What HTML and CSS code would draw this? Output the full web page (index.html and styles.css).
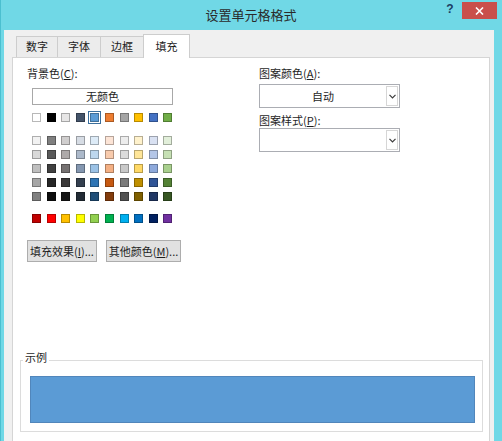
FILE: index.html
```html
<!DOCTYPE html>
<html lang="zh-CN">
<head>
<meta charset="utf-8">
<title>设置单元格格式</title>
<link rel="stylesheet" href="styles.css">
</head>
<body>
<div class="window">
  <div class="titlebar">
    <div class="spacer"></div>
    <div class="title">设置单元格格式</div>
    <div class="controls">
      <div class="help">?</div>
      <div class="close"><svg width="9" height="8" viewBox="0 0 9 8"><path d="M1 0.5 L8 7.5 M8 0.5 L1 7.5" stroke="#fff" stroke-width="1.6"/></svg></div>
    </div>
  </div>
  <div class="client">
    <div class="tabs">
      <div class="tab t1">数字</div>
      <div class="tab t2">字体</div>
      <div class="tab t3">边框</div>
      <div class="tab t4 active">填充</div>
    </div>
    <div class="panel">
      <div class="top">
        <div class="left">
          <div class="label">背景色(<u>C</u>):</div>
          <div class="nocolor">无颜色</div>
          <div class="swrow first">
            <span class="sw" style="background:#ffffff"></span>
            <span class="sw" style="background:#000000"></span>
            <span class="sw" style="background:#e7e6e6"></span>
            <span class="sw" style="background:#44546a"></span>
            <span class="sw sel" style="background:#5b9bd5"></span>
            <span class="sw" style="background:#ed7d31"></span>
            <span class="sw" style="background:#a5a5a5"></span>
            <span class="sw" style="background:#ffc000"></span>
            <span class="sw" style="background:#4472c4"></span>
            <span class="sw" style="background:#70ad47"></span>
          </div>
          <div class="grid">
            <span class="sw" style="background:#f2f2f2"></span>
            <span class="sw" style="background:#7f7f7f"></span>
            <span class="sw" style="background:#d0cece"></span>
            <span class="sw" style="background:#d6dce4"></span>
            <span class="sw" style="background:#ddebf7"></span>
            <span class="sw" style="background:#fce4d6"></span>
            <span class="sw" style="background:#ededed"></span>
            <span class="sw" style="background:#fff2cc"></span>
            <span class="sw" style="background:#d9e1f2"></span>
            <span class="sw" style="background:#e2efda"></span>

            <span class="sw" style="background:#d9d9d9"></span>
            <span class="sw" style="background:#595959"></span>
            <span class="sw" style="background:#aeaaaa"></span>
            <span class="sw" style="background:#acb9ca"></span>
            <span class="sw" style="background:#bdd7ee"></span>
            <span class="sw" style="background:#f8cbad"></span>
            <span class="sw" style="background:#dbdbdb"></span>
            <span class="sw" style="background:#ffe699"></span>
            <span class="sw" style="background:#b4c6e7"></span>
            <span class="sw" style="background:#c6e0b4"></span>

            <span class="sw" style="background:#bfbfbf"></span>
            <span class="sw" style="background:#404040"></span>
            <span class="sw" style="background:#757171"></span>
            <span class="sw" style="background:#8497b0"></span>
            <span class="sw" style="background:#9bc2e6"></span>
            <span class="sw" style="background:#f4b084"></span>
            <span class="sw" style="background:#c9c9c9"></span>
            <span class="sw" style="background:#ffd966"></span>
            <span class="sw" style="background:#8ea9db"></span>
            <span class="sw" style="background:#a9d08e"></span>

            <span class="sw" style="background:#a6a6a6"></span>
            <span class="sw" style="background:#262626"></span>
            <span class="sw" style="background:#3a3838"></span>
            <span class="sw" style="background:#333f4f"></span>
            <span class="sw" style="background:#2f75b5"></span>
            <span class="sw" style="background:#c65911"></span>
            <span class="sw" style="background:#7b7b7b"></span>
            <span class="sw" style="background:#bf8f00"></span>
            <span class="sw" style="background:#305496"></span>
            <span class="sw" style="background:#548235"></span>

            <span class="sw" style="background:#808080"></span>
            <span class="sw" style="background:#0d0d0d"></span>
            <span class="sw" style="background:#161616"></span>
            <span class="sw" style="background:#222b35"></span>
            <span class="sw" style="background:#1f4e78"></span>
            <span class="sw" style="background:#833c0c"></span>
            <span class="sw" style="background:#525252"></span>
            <span class="sw" style="background:#806000"></span>
            <span class="sw" style="background:#203764"></span>
            <span class="sw" style="background:#375623"></span>
          </div>
          <div class="swrow standard">
            <span class="sw" style="background:#c00000"></span>
            <span class="sw" style="background:#ff0000"></span>
            <span class="sw" style="background:#ffc000"></span>
            <span class="sw" style="background:#ffff00"></span>
            <span class="sw" style="background:#92d050"></span>
            <span class="sw" style="background:#00b050"></span>
            <span class="sw" style="background:#00b0f0"></span>
            <span class="sw" style="background:#0070c0"></span>
            <span class="sw" style="background:#002060"></span>
            <span class="sw" style="background:#7030a0"></span>
          </div>
          <div class="buttons">
            <button class="btn b1">填充效果(<u>I</u>)...</button>
            <button class="btn b2">其他颜色(<u>M</u>)...</button>
          </div>
        </div>
        <div class="right">
          <div class="label">图案颜色(<u>A</u>):</div>
          <div class="combo c1">
            <span class="val">自动</span>
            <span class="arrow"><svg width="7" height="5" viewBox="0 0 7 5"><path d="M0.5 0.8 L3.5 3.8 L6.5 0.8" fill="none" stroke="#3c3c3c" stroke-width="1.2"/></svg></span>
          </div>
          <div class="label l2">图案样式(<u>P</u>):</div>
          <div class="combo c2">
            <span class="val"></span>
            <span class="arrow"><svg width="7" height="5" viewBox="0 0 7 5"><path d="M0.5 0.8 L3.5 3.8 L6.5 0.8" fill="none" stroke="#3c3c3c" stroke-width="1.2"/></svg></span>
          </div>
        </div>
      </div>
      <fieldset class="sample">
        <legend>示例</legend>
        <div class="fill"></div>
      </fieldset>
    </div>
  </div>
</div>
</body>
</html>
```

FILE: styles.css
```css
* { box-sizing: border-box; }

body {
  margin: 0;
  font-family: "Noto Sans CJK SC", "Noto Sans", sans-serif;
  font-size: 11px;
  color: #1e1e1e;
}

.window {
  width: 502px;
  height: 441px;
  background: #70d8e6;
  border-left: 1px solid #4bbfd0;
  display: flex;
  flex-direction: column;
  overflow: hidden;
}

.titlebar {
  height: 30px;
  flex: none;
  display: flex;
  align-items: center;
}

.spacer { width: 59px; }

.title {
  flex: 1;
  text-align: center;
  font-size: 13px;
  line-height: 18px;
  color: #2a2a2a;
}

.controls {
  width: 60px;
  align-self: flex-start;
  padding-top: 2px;
  display: flex;
  align-items: flex-start;
}

.help {
  margin-left: 3px;
  width: 10px;
  font-family: "Liberation Sans", sans-serif;
  font-weight: bold;
  font-size: 12px;
  line-height: 15px;
  color: #1c3d63;
  text-align: center;
}

.close {
  margin-left: 7px;
  width: 35px;
  height: 17px;
  background: #c94f4b;
  display: flex;
  align-items: center;
  justify-content: center;
}

.client {
  flex: 1;
  margin: 0 8px 0 3px;
  background: #f0f0f0;
  padding: 4px 4px 0 8px;
  display: flex;
  flex-direction: column;
  min-height: 0;
}

.tabs {
  display: flex;
  align-items: flex-end;
  height: 24px;
  margin: 0 0 -1px 4px;
  position: relative;
  z-index: 1;
}

.tab {
  height: 21px;
  margin-bottom: 1px;
  margin-right: -1px;
  border: 1px solid #cdcdcd;
  border-bottom: none;
  background: #ececec;
  line-height: 19px;
  text-align: center;
  color: #222;
}

.t1 { width: 42px; }
.t2 { width: 44px; }
.t3 { width: 44px; }
.t4 { width: 47px; }

.tab.active {
  height: 24px;
  margin-bottom: 0;
  background: #fff;
  line-height: 22px;
}

.panel {
  flex: 1;
  margin-bottom: -8px;
  background: #fff;
  border: 1px solid #d5d5d5;
  padding-top: 8px;
  display: flex;
  flex-direction: column;
}

.top {
  display: grid;
  grid-template-columns: 232px 141px;
  padding-left: 14px;
}

.label {
  height: 14px;
  line-height: 14px;
  white-space: nowrap;
}

.nocolor {
  margin: 8px 0 0 5px;
  width: 141px;
  height: 17px;
  border: 1px solid #a8a8a8;
  background: #fff;
  text-align: center;
  line-height: 15px;
}

.swrow {
  display: flex;
  gap: 5.6px;
  margin-left: 5px;
}

.swrow.first { margin-top: 8px; }
.swrow.standard { margin-top: 13px; }

.grid {
  display: grid;
  grid-template-columns: repeat(10, 9px);
  column-gap: 5.6px;
  row-gap: 5px;
  margin: 14px 0 0 5px;
}

.sw {
  display: block;
  width: 9px;
  height: 9px;
  flex: none;
  box-shadow: inset 0 0 0 1px rgba(0, 0, 0, 0.28);
}

.sw.sel {
  outline: 1px solid #3a6e9c;
  outline-offset: 1px;
}

.buttons {
  display: flex;
  gap: 9px;
  margin-top: 17px;
}

.btn {
  height: 22px;
  padding: 0;
  border: 1px solid #adadad;
  background: #e1e1e1;
  font: inherit;
  color: #1e1e1e;
  line-height: 20px;
  text-align: center;
}

.b1 { width: 70px; }
.b2 { width: 75px; }

.combo {
  margin-top: 4px;
  width: 141px;
  height: 24px;
  border: 1px solid #abadb3;
  background: #fff;
  display: flex;
}

.combo .val {
  flex: 1;
  text-align: center;
  line-height: 22px;
}

.combo .arrow {
  width: 12px;
  margin: 1px 1px 1px 0;
  border: 1px solid #d6d6d6;
  display: flex;
  align-items: center;
  justify-content: center;
}

.label.l2 { margin-top: 5px; }
.combo.c2 { margin-top: 1px; }

.sample {
  margin: 88px 6px 0 7px;
  padding: 6px 7px 8px 9px;
  border: 1px solid #dcdcdc;
  min-width: 0;
}

.sample legend {
  margin-left: -7px;
  padding: 0 2px 6px;
  line-height: 14px;
  font-size: 11px;
}

.fill {
  height: 47px;
  background: #5b9bd5;
  border: 1px solid #5186bb;
}
```
